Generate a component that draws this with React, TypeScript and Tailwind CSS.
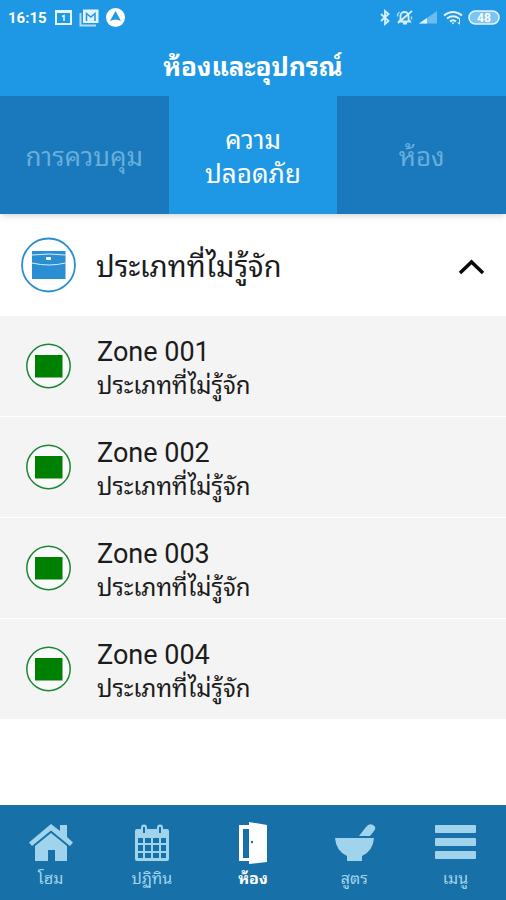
import type { ReactNode } from 'react'
import clsx from 'clsx'

const UNKNOWN_TYPE = 'ประเภทที่ไม่รู้จัก'

const tabs = [
  { id: 'control', label: 'การควบคุม' },
  { id: 'security', label: 'ความ ปลอดภัย' },
  { id: 'rooms', label: 'ห้อง' },
]

const zones = ['Zone 001', 'Zone 002', 'Zone 003', 'Zone 004']

function NotificationIcons() {
  return (
    <svg width="72" height="20" viewBox="0 0 72 20" fill="none" aria-hidden="true">
      <rect x="1" y="3" width="15" height="13" stroke="#e4f4ff" strokeWidth="2" />
      <path d="M0 2h17v3H0z" fill="#e4f4ff" />
      <path d="M7 8.500l2-1V13" stroke="#e4f4ff" strokeWidth="1.500" />
      <path d="M25.500 5v12.500H41" stroke="#b4dcf7" strokeWidth="2" />
      <path d="M28 1.500h15.500v13.500H28z" fill="#e4f4ff" />
      <path d="M31.500 13V5.500l4.300 3.500 4.200-3.500V13" stroke="#1e98e4" strokeWidth="1.500" />
      <circle cx="60.500" cy="9.500" r="9.500" fill="#fff" />
      <path d="M60.500 3l5.500 10q-5.500-3-11 0z" fill="#1e98e4" />
    </svg>
  )
}

function SystemIcons() {
  return (
    <svg width="120" height="20" viewBox="0 0 120 20" fill="none" aria-hidden="true">
      <path d="M1 6l7.500 7L5 16V3l3.500 3L1 13" stroke="#d8efff" strokeWidth="1.800" />
      <path
        d="M19 13.500h11l-1.500-2V8a4 4 0 0 0-8 0v3.500zM23 15.500h4M18 15L32 3"
        stroke="#d8efff"
        strokeWidth="1.800"
      />
      <path d="M17.500 8.500q0-3 2-4.500M31.500 8.500v3" stroke="#a5d5f7" strokeWidth="1.500" />
      <path d="M39 15.500L57 3v12.500z" fill="#6cbcf0" />
      <path d="M39 15.500l8-5.500v5.500z" fill="#e4f4ff" />
      <path
        d="M64 7.500q9-7 18 0M67 10.500q6-4.500 12 0M70 13.500q3-2.500 6 0"
        stroke="#e4f4ff"
        strokeWidth="2"
      />
      <path d="M71.500 14.500h3L73 16.500z" fill="#e4f4ff" />
      <path d="M79.500 10v6M77.500 14l2 2.500" stroke="#d8efff" strokeWidth="1" />
      <rect x="89" y="3" width="30" height="13" rx="6.500" fill="#7cc4f2" stroke="#e4f4ff" strokeWidth="1.500" />
      <text
        x="104"
        y="14"
        textAnchor="middle"
        fill="#fff"
        className="font-['Roboto',sans-serif] text-xs font-bold"
      >
        48
      </text>
    </svg>
  )
}

function StatusBar() {
  return (
    <div className="flex h-9 items-center justify-between pr-1.5 pl-2 text-white">
      <div className="flex items-center gap-2">
        <span className="font-['Roboto',sans-serif] text-[15px] font-bold">16:15</span>
        <NotificationIcons />
      </div>
      <SystemIcons />
    </div>
  )
}

function ChestIcon() {
  return (
    <svg className="shrink-0" width="56" height="56" viewBox="0 0 56 56" fill="none" aria-hidden="true">
      <circle cx="28.500" cy="28" r="26.500" stroke="#2a8fd2" strokeWidth="1.800" />
      <path d="M12 14h33.500v28H12z" fill="#2a8fd2" />
      <path d="M12 18q17-2 33.500 0M12 26q17 4 33.500 0" stroke="#d9ecf8" />
      <rect x="26" y="20" width="5" height="3" rx="1" fill="#fff" />
    </svg>
  )
}

function ZoneIcon() {
  return (
    <svg className="mx-1.5 shrink-0" width="45" height="46" viewBox="0 0 45 46" aria-hidden="true">
      <circle cx="22.500" cy="23" r="21.700" fill="#fafafa" stroke="#1c8634" strokeWidth="1.500" />
      <path d="M9 12h27.500v22.500H9z" fill="#008000" />
    </svg>
  )
}

function HomeIcon() {
  return (
    <svg width="46" height="40" viewBox="0 0 46 40" fill="#a0d4ec" aria-hidden="true">
      <path d="M23 1L1 19.500l3 3.500L23 7.500 42 23l3-3.500-6-5.500V2h-7v6z" />
      <path d="M23 10L7 23v15h13V27h7v11h12V23z" />
    </svg>
  )
}

function CalendarIcon() {
  return (
    <svg width="46" height="40" viewBox="0 0 46 40" aria-hidden="true">
      <rect x="6" y="6" width="34" height="32" rx="2" fill="#a0d4ec" />
      <g fill="#a0d4ec" stroke="#1870a8">
        <rect x="12" y="1.500" width="6" height="11" rx="3" stroke="none" />
        <rect x="28" y="1.500" width="6" height="11" rx="3" stroke="none" />
        <path d="M15 4v6M31 4v6" strokeWidth="2" />
      </g>
      <path
        fill="#1870a8"
        d="M9 15h5v5H9zM16 15h6v5h-6zM24 15h6v5h-6zM32 15h5v5h-5zM9 22h5v6H9zM16 22h6v6h-6zM24 22h6v6h-6zM32 22h5v6h-5zM9 30h5v5H9zM16 30h6v5h-6zM24 30h6v5h-6zM32 30h5v5h-5z"
      />
    </svg>
  )
}

function DoorIcon() {
  return (
    <svg width="46" height="44" viewBox="0 0 46 44" aria-hidden="true">
      <path d="M9 4h28v36H9z" fill="#fff" />
      <path d="M13 8h6v29h-6z" fill="#1870a8" />
      <path d="M19 1l18 3v37l-18 2z" fill="#fff" />
      <circle cx="22" cy="21" r="1.200" fill="#1870a8" />
    </svg>
  )
}

function MortarIcon() {
  return (
    <svg width="46" height="40" viewBox="0 0 46 40" fill="#a0d4ec" aria-hidden="true">
      <path d="M28 13l7-9q3-4 7-2t1 6l-4 5z" />
      <path d="M4 15h39q-1 13-12 18v5H16v-5Q5 28 4 15z" />
    </svg>
  )
}

function MenuIcon() {
  return (
    <svg width="46" height="40" viewBox="0 0 46 40" fill="#a0d4ec" aria-hidden="true">
      <rect x="3" y="2" width="41" height="8" rx="1" />
      <rect x="3" y="15" width="41" height="8" rx="1" />
      <rect x="3" y="28" width="41" height="8" rx="1" />
    </svg>
  )
}

interface NavItemProps {
  label: string
  icon: ReactNode
  active?: boolean
}

function NavItem({ label, icon, active }: NavItemProps) {
  return (
    <a
      href="#"
      className={clsx(
        'flex flex-1 flex-col items-center pt-3.5',
        active ? 'font-bold text-white' : 'text-[#a0d4ec]',
      )}
    >
      <span className="flex h-12 items-center">{icon}</span>
      <span className="text-base/6">{label}</span>
    </a>
  )
}

export default function App() {
  return (
    <div className="flex min-h-screen flex-col bg-white font-['Roboto','Noto_Sans_Thai_Looped','Loma','Noto_Sans',sans-serif] text-[#1c1c1c]">
      <header className="z-10 bg-[#1e98e4] text-white shadow-md">
        <StatusBar />
        <h1 className="h-[60px] text-center text-[26px]/[62px] font-bold">ห้องและอุปกรณ์</h1>
        <div role="tablist" className="grid h-[118px] grid-cols-3">
          {tabs.map((tab) => (
            <button
              key={tab.id}
              type="button"
              role="tab"
              aria-selected={tab.id === 'security'}
              className={clsx(
                'px-6 pt-1 text-[26px]/[34px]',
                tab.id === 'security' ? 'text-white' : 'bg-[#1979bc] text-[#67aeda]',
              )}
            >
              {tab.label}
            </button>
          ))}
        </div>
      </header>

      <main className="flex-1">
        <button
          type="button"
          aria-expanded="true"
          className="flex h-[102px] w-full items-center gap-5 px-5 text-left"
        >
          <ChestIcon />
          <span className="flex-1 pt-1 text-[29px]/9">{UNKNOWN_TYPE}</span>
          <svg width="30" height="20" viewBox="0 0 30 20" fill="none" aria-hidden="true">
            <path d="M4 18L15.500 7 27 18" stroke="#0a0a0a" strokeWidth="3.500" />
          </svg>
        </button>
        <ul>
          {zones.map((zone) => (
            <li
              key={zone}
              className="flex h-[101px] items-center gap-5 border-b border-white bg-[#f4f4f4] px-5"
            >
              <ZoneIcon />
              <div className="pt-1">
                <p className="text-[27px]/9">{zone}</p>
                <p className="text-2xl/8">{UNKNOWN_TYPE}</p>
              </div>
            </li>
          ))}
        </ul>
      </main>

      <nav className="sticky bottom-0 flex h-[95px] bg-[#1870a8]">
        <NavItem label="โฮม" icon={<HomeIcon />} />
        <NavItem label="ปฏิทิน" icon={<CalendarIcon />} />
        <NavItem label="ห้อง" icon={<DoorIcon />} active />
        <NavItem label="สูตร" icon={<MortarIcon />} />
        <NavItem label="เมนู" icon={<MenuIcon />} />
      </nav>
    </div>
  )
}
